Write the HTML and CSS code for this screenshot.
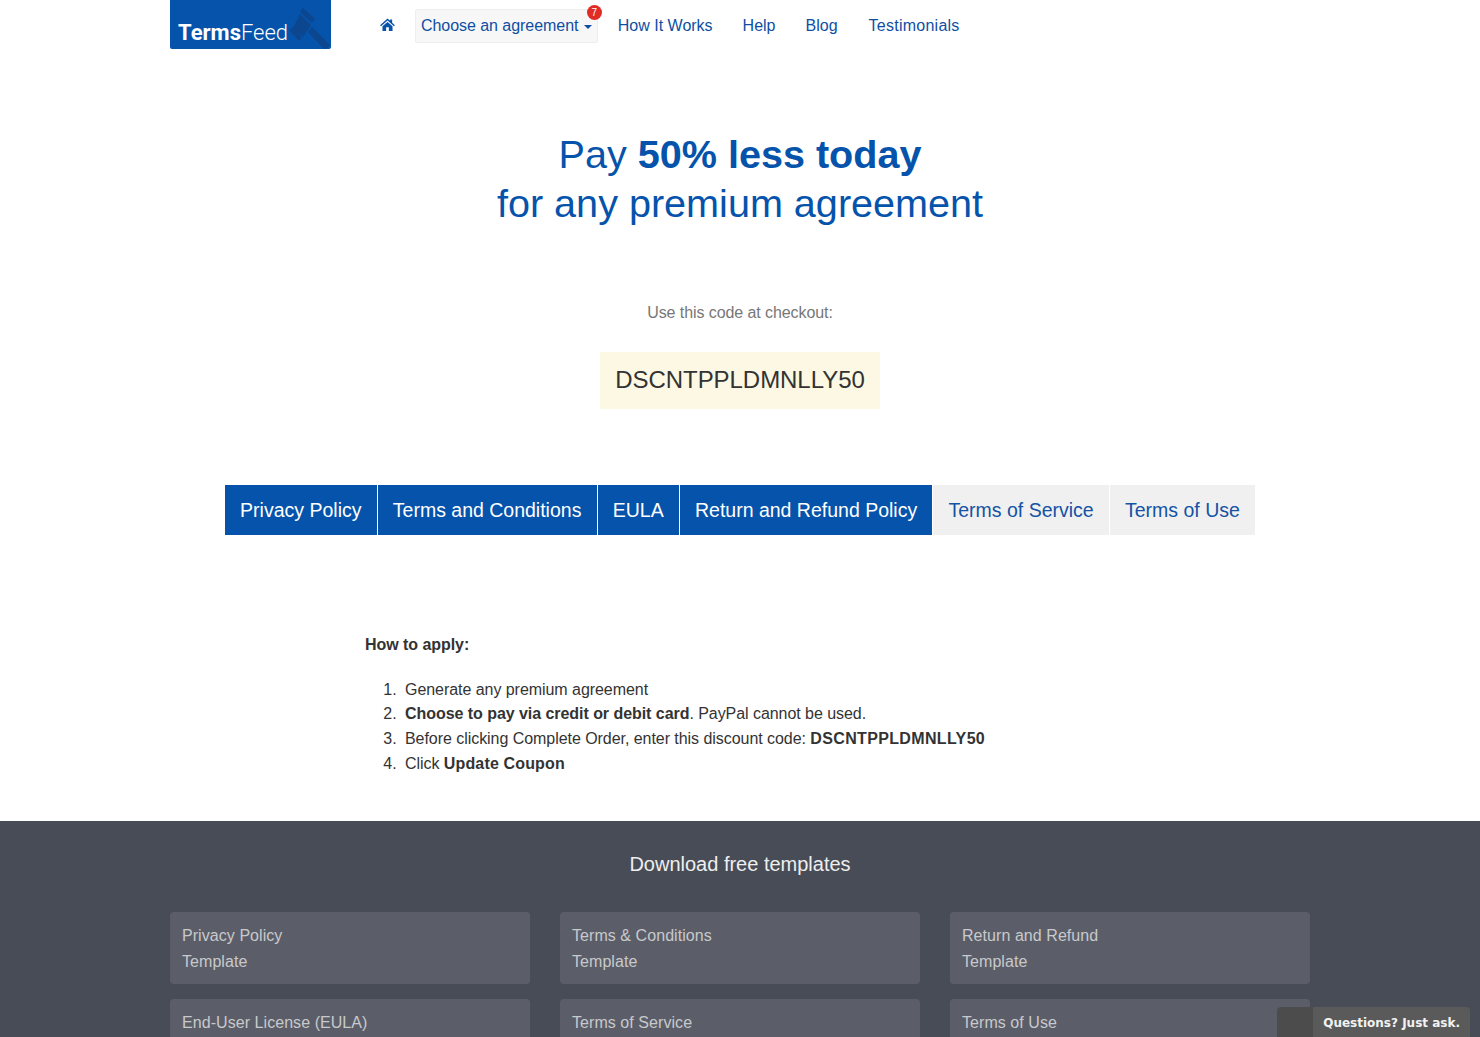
FILE: index.html
```html
<!DOCTYPE html>
<html lang="en">
<head>
  <meta charset="UTF-8" />
  <title>Pay 50% less today – TermsFeed</title>
  <link rel="stylesheet" href="styles.css">
</head>
<body>
  <header class="topbar">
    <a class="logo" href="#">
      <span class="logo-text"><b>Terms</b>Feed</span>
      <svg class="logo-gavel" viewBox="0 0 43 49" width="43" height="49">
        <path d="M15 8 L27 19 L24 23 L12 12 Z M12 14 L23 25 L15 37 L5 28 Z M5 27 L14 38 L11 41 L1 30 Z M24 27 L42 45 L38 49 L36 49 L20 32 Z" fill="#0c468f"/>
      </svg>
    </a>
    <nav class="nav">
      <a class="nav-home" href="#">
        <svg viewBox="0 0 16 14" width="15" height="13">
          <path d="M8 0.5 L10.8 3 V1.5 H13 V5 L16 7.8 L15 8.8 L8 2.6 L1 8.8 L0 7.8 Z M2.6 9 L8 4.2 L13.4 9 V14 H9.5 V10 H6.5 V14 H2.6 Z" fill="#0553ab"/>
        </svg>
      </a>
      <a class="nav-drop" href="#">
        Choose an agreement <span class="caret"></span>
        <span class="badge">7</span>
      </a>
      <a href="#">How It Works</a>
      <a href="#">Help</a>
      <a href="#">Blog</a>
      <a class="nav-wide" href="#">Testimonials</a>
    </nav>
  </header>

  <section class="hero">
    <h1>Pay <b>50% less today</b><br>for any premium agreement</h1>
    <p class="code-label">Use this code at checkout:</p>
    <div class="code">DSCNTPPLDMNLLY50</div>
  </section>

  <div class="tabs">
    <a class="tab tab-on" href="#">Privacy Policy</a>
    <a class="tab tab-on" href="#">Terms and Conditions</a>
    <a class="tab tab-on" href="#">EULA</a>
    <a class="tab tab-on" href="#">Return and Refund Policy</a>
    <a class="tab" href="#">Terms of Service</a>
    <a class="tab" href="#">Terms of Use</a>
  </div>

  <section class="howto">
    <p class="howto-title">How to apply:</p>
    <ol>
      <li>Generate any premium agreement</li>
      <li><b>Choose to pay via credit or debit card</b>. PayPal cannot be used.</li>
      <li>Before clicking Complete Order, enter this discount code: <b class="howto-code">DSCNTPPLDMNLLY50</b></li>
      <li>Click <b class="howto-btn">Update Coupon</b></li>
    </ol>
  </section>

  <footer class="footer">
    <h2>Download free templates</h2>
    <div class="cards">
      <a class="card" href="#">Privacy Policy<br>Template</a>
      <a class="card" href="#">Terms &amp; Conditions<br>Template</a>
      <a class="card" href="#">Return and Refund<br>Template</a>
      <a class="card" href="#">End-User License (EULA)</a>
      <a class="card" href="#">Terms of Service</a>
      <a class="card" href="#">Terms of Use</a>
    </div>
  </footer>

  <div class="chat">
    <span class="chat-icon"></span>
    <span class="chat-text">Questions? Just ask.</span>
  </div>
</body>
</html>
```

FILE: styles.css
```css
html, body {
  height: 1037px;
  overflow: hidden;
}

body {
  margin: 0;
  font-family: "Liberation Sans", Arial, sans-serif;
  font-size: 16px;
  color: #333;
  background: #fff;
}

a {
  text-decoration: none;
}

.topbar {
  display: flex;
  width: 1140px;
  height: 49px;
  margin: 0 auto;
}

.logo {
  position: relative;
  display: block;
  width: 161px;
  height: 49px;
  background: #0553ab;
  border-radius: 0 0 2px 2px;
  overflow: hidden;
}

.logo-text {
  position: absolute;
  left: 8px;
  top: 19px;
  font-family: Roboto, sans-serif;
  font-size: 22px;
  font-weight: 300;
  line-height: 27px;
  color: #fff;
}

.logo-text b {
  font-weight: 700;
}

.logo-gavel {
  position: absolute;
  left: 118px;
  top: 0;
}

.nav {
  display: flex;
  align-items: flex-start;
  gap: 30px;
  margin-left: 49px;
  padding-top: 9px;
}

.nav a {
  display: block;
  color: #0e4fa3;
  line-height: 34px;
  height: 34px;
}

.nav .nav-home {
  width: 15px;
  margin-right: -10px;
}

.nav .nav-drop {
  position: relative;
  box-sizing: border-box;
  padding: 0 5px;
  margin-right: -10px;
  background: #f7f7f7;
  border: 1px solid #eeeeee;
  border-radius: 2px;
  line-height: 32px;
  letter-spacing: -0.05px;
}

.nav .nav-wide {
  margin-left: 1px;
  letter-spacing: 0.25px;
}

.caret {
  display: inline-block;
  width: 0;
  height: 0;
  margin-left: 1px;
  vertical-align: middle;
  border-top: 4px solid #0e4fa3;
  border-left: 4px solid transparent;
  border-right: 4px solid transparent;
}

.badge {
  position: absolute;
  right: -5px;
  top: -5px;
  width: 15px;
  height: 15px;
  border-radius: 50%;
  background: #e02b27;
  color: #fff;
  font-size: 10px;
  line-height: 15px;
  text-align: center;
}

.hero {
  text-align: center;
}

.hero h1 {
  margin: 81px 0 0;
  font-size: 39.6px;
  line-height: 49px;
  font-weight: normal;
  color: #0553ab;
}

.code-label {
  margin: 74px 0 0;
  line-height: 22px;
  letter-spacing: -0.08px;
  color: #777;
}

.code {
  width: fit-content;
  margin: 28px auto 0;
  padding: 15px 15px 16px;
  background: #fcf8e3;
  font-size: 24px;
  line-height: 26px;
  letter-spacing: -0.05px;
  color: #333;
}

.tabs {
  display: flex;
  justify-content: center;
  gap: 1px;
  margin-top: 76px;
}

.tab {
  padding: 0 15.17px;
  font-size: 19.5px;
  line-height: 50px;
  color: #1453a5;
  background: #f0f0f0;
}

.tab-on {
  color: #fff;
  background: #0553ab;
}

.howto {
  width: 750px;
  margin: 98px auto 0;
  line-height: 24.7px;
  letter-spacing: -0.05px;
}

.howto-title {
  margin: 0 0 20px;
  font-weight: bold;
}

.howto ol {
  margin: 0;
  padding-left: 36px;
}

.howto li {
  padding-left: 4px;
}

.howto-code {
  letter-spacing: 0.35px;
}

.howto-btn {
  letter-spacing: 0.15px;
}

.footer {
  margin-top: 44px;
  height: 216px;
  background: #484c56;
}

.footer h2 {
  margin: 0;
  padding-top: 29px;
  font-size: 20px;
  line-height: 28px;
  font-weight: normal;
  text-align: center;
  color: #eee;
}

.cards {
  display: grid;
  grid-template-columns: repeat(3, 360px);
  gap: 15px 30px;
  width: 1140px;
  margin: 34px auto 0;
}

.card {
  height: 72px;
  padding: 11px 12px;
  box-sizing: border-box;
  background: #5b5e68;
  border-radius: 4px;
  line-height: 26px;
  letter-spacing: 0.06px;
  color: #c8c9cc;
}

.chat {
  position: fixed;
  right: 10px;
  bottom: 0;
  display: flex;
  height: 30px;
  border-radius: 4px 4px 0 0;
  overflow: hidden;
}

.chat-icon {
  width: 36px;
  background: #4c4c4c;
}

.chat-text {
  padding: 0 10px;
  background: #5a5a5a;
  font-family: "DejaVu Sans", sans-serif;
  font-size: 12px;
  font-weight: bold;
  line-height: 32px;
  color: #f2f2f2;
}
```
